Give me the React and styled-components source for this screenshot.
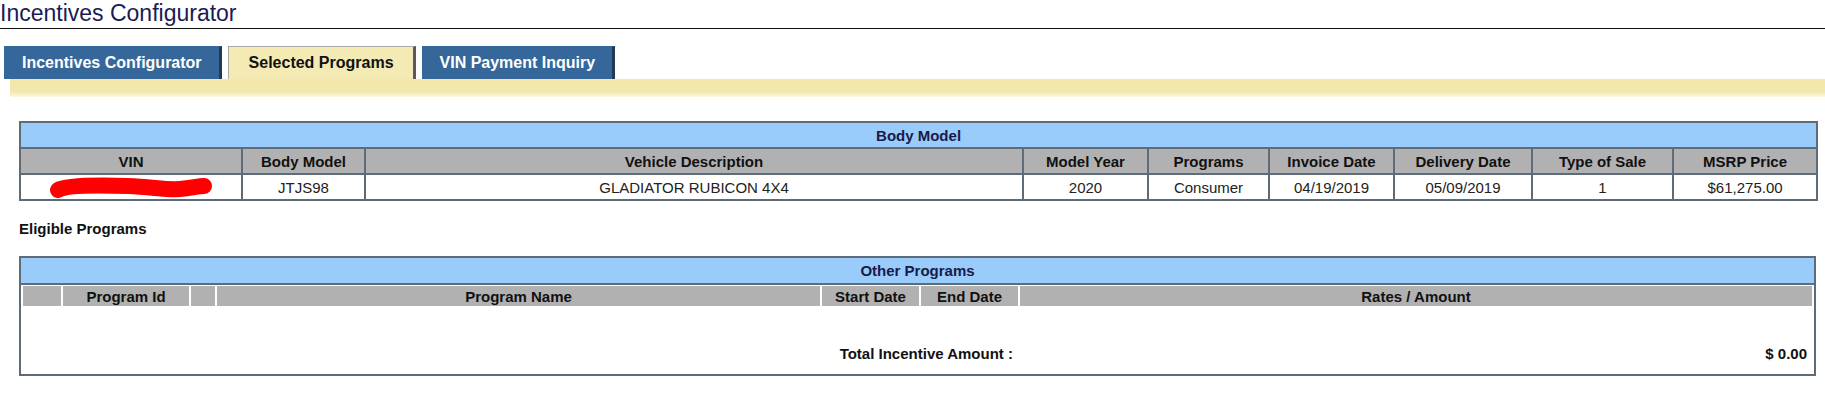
import React from 'react';
import styled, { createGlobalStyle } from 'styled-components';

const GlobalStyle = createGlobalStyle`
    body {
        margin: 0;
        background: #fff;
        font-family: "Liberation Sans", Arial, sans-serif;
        color: #111;
    }
`

const Page = styled.div`
    width: 1825px;
`

const Title = styled.h1`
    margin: 0;
    height: 28px;
    font-size: 23px;
    font-weight: normal;
    line-height: 26px;
    color: #1b1b55;
    border-bottom: 1px solid #111;
`

const TabBar = styled.div`
    display: flex;
    align-items: flex-end;
    gap: 6px;
    margin-top: 17px;
    padding-left: 4px;
`

const Tab = styled.div`
    box-sizing: border-box;
    height: 33px;
    padding: 0 ${p => (p.$active ? '19px 0 20px' : '17px')};
    display: flex;
    align-items: center;
    font-size: 16px;
    font-weight: bold;
    color: ${p => (p.$active ? '#111' : '#fff')};
    background: ${p => (p.$active ? '#f4eab4' : '#35679a')};
    border-top: 1px solid ${p => (p.$active ? '#a8a8a8' : '#35679a')};
    border-left: 1px solid ${p => (p.$active ? '#a8a8a8' : '#35679a')};
    border-right: 3px solid ${p => (p.$active ? '#5a5a5a' : '#223a55')};
    cursor: pointer;
`

const Band = styled.div`
    margin-left: 10px;
    height: 18px;
    background: linear-gradient(to bottom, #f2e8ac 0%, #f2e8ac 70%, #fbf8e6 100%);
`

const Content = styled.div`
    padding: 24px 9px 0 19px;
`

const DataTable = styled.table`
    width: 1797px;
    table-layout: fixed;
    border-collapse: collapse;
    border: 2px solid #5e6b78;
    font-size: 15px;

    th, td {
        border: 2px solid #5e6b78;
        height: 24px;
        padding: 0;
        text-align: center;
        overflow: hidden;
        white-space: nowrap;
    }
`

const BlueHead = styled.th`
    background: #99cbfb;
    color: #1a1a48;
    font-weight: bold;
`

const GrayHead = styled.th`
    background: #b1b1b1;
    color: #111;
    font-weight: bold;
`

const Cell = styled.td`
    background: #fff;
    color: #222;
`

const Scribble = styled.svg`
    display: block;
    margin: 0 auto;
`

const SectionLabel = styled.div`
    margin-top: 19px;
    height: 18px;
    font-size: 15px;
    font-weight: bold;
    line-height: 18px;
    color: #111;
`

const Panel = styled.div`
    box-sizing: border-box;
    width: 1797px;
    margin-top: 18px;
    border: 2px solid #5e6b78;
    padding-bottom: 6px;
`

const PanelHeader = styled.div`
    height: 25px;
    line-height: 25px;
    background: #99cbfb;
    border-bottom: 2px solid #5e6b78;
    text-align: center;
    font-size: 15px;
    font-weight: bold;
    color: #1a1a48;
`

const ProgramTable = styled.table`
    width: 100%;
    table-layout: fixed;
    border-collapse: separate;
    border-spacing: 2px 0;
    margin-top: 1px;
    font-size: 15px;

    th {
        height: 20px;
        padding: 0;
        background: #b1b1b1;
        font-weight: bold;
        color: #111;
        white-space: nowrap;
    }
`

const EmptyRow = styled.tr`
    height: 32px;
`

const TotalCell = styled.td`
    height: 30px;
    padding: 0 5px 0 0;
    text-align: right;
    font-weight: bold;
    color: #111;
`

const vehicleCols = [222, 123, 658, 125, 121, 125, 138, 141, 144];
const vehicleHeads = ['VIN', 'Body Model', 'Vehicle Description', 'Model Year', 'Programs', 'Invoice Date', 'Delivery Date', 'Type of Sale', 'MSRP Price'];
const vehicle = ['JTJS98', 'GLADIATOR RUBICON 4X4', '2020', 'Consumer', '04/19/2019', '05/09/2019', '1', '$61,275.00'];

const programCols = [38, 126, 24, 603, 97, 97, 792];
const programHeads = ['', 'Program Id', '', 'Program Name', 'Start Date', 'End Date', 'Rates / Amount'];

const tabs = ['Incentives Configurator', 'Selected Programs', 'VIN Payment Inquiry'];

function App() {
    return (
        <Page>
            <GlobalStyle />
            <Title>Incentives Configurator</Title>
            <TabBar>
                {tabs.map(t => (
                    <Tab key={t} $active={t === 'Selected Programs'}>{t}</Tab>
                ))}
            </TabBar>
            <Band />
            <Content>
                <DataTable>
                    <colgroup>
                        {vehicleCols.map((w, i) => <col key={i} style={{ width: w }} />)}
                    </colgroup>
                    <thead>
                        <tr><BlueHead colSpan={9}>Body Model</BlueHead></tr>
                        <tr>{vehicleHeads.map(h => <GrayHead key={h}>{h}</GrayHead>)}</tr>
                    </thead>
                    <tbody>
                        <tr>
                            <Cell>
                                {/* red marker over the VIN */}
                                <Scribble width="166" height="22" viewBox="0 0 166 22">
                                    <path d="M10 14 C 18 9, 50 9, 80 10 C 105 11, 118 14, 132 13 C 144 12, 150 10, 156 10"
                                        fill="none" stroke="#ff0000" strokeWidth="16" strokeLinecap="round" />
                                </Scribble>
                            </Cell>
                            {vehicle.map((v, i) => <Cell key={i}>{v}</Cell>)}
                        </tr>
                    </tbody>
                </DataTable>

                <SectionLabel>Eligible Programs</SectionLabel>

                <Panel>
                    <PanelHeader>Other Programs</PanelHeader>
                    <ProgramTable>
                        <colgroup>
                            {programCols.map((w, i) => <col key={i} style={{ width: w }} />)}
                        </colgroup>
                        <thead>
                            <tr>{programHeads.map((h, i) => <th key={i}>{h}</th>)}</tr>
                        </thead>
                        <tbody>
                            <EmptyRow><td colSpan={7} /></EmptyRow>
                            <tr>
                                <TotalCell colSpan={6}>Total Incentive Amount :</TotalCell>
                                <TotalCell>$ 0.00</TotalCell>
                            </tr>
                        </tbody>
                    </ProgramTable>
                </Panel>
            </Content>
        </Page>
    );
}

export default App;
